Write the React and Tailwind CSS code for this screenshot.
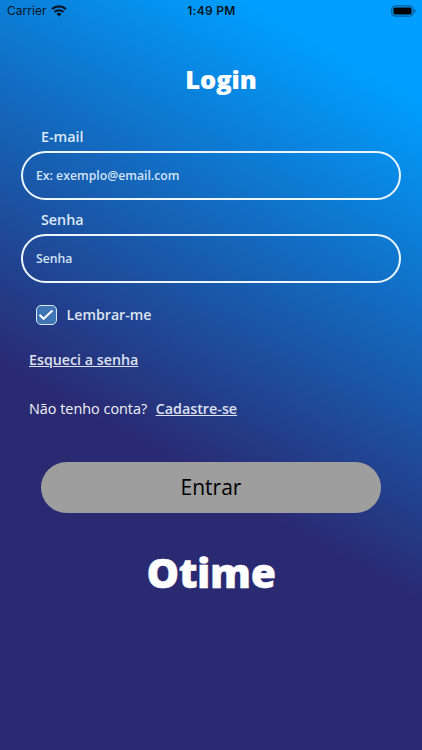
import React from "react";

function StatusBar() {
  return (
    <div className="grid h-[22px] grid-cols-3 items-center pl-[7px] pr-[6px] font-['Inter',sans-serif] text-[12px] leading-[22px] text-[#031522]">
      <div className="flex items-center gap-[4px]">
        <span className="tracking-[0.05px]">Carrier</span>
        <svg width="16" height="12" viewBox="0 0 16 12" fill="none" stroke="currentColor">
          <path d="M1.1 4.1a10 10 0 0 1 13.8 0" strokeWidth="2.4" />
          <path d="M3.5 7a6.5 6.5 0 0 1 9 0" strokeWidth="2.1" />
          <path d="M8 11.4 5.5 8.9a3.6 3.6 0 0 1 5 0Z" fill="currentColor" stroke="none" />
        </svg>
      </div>
      <span className="text-center font-semibold tracking-[0.3px]">1:49 PM</span>
      <svg className="justify-self-end" width="25" height="12" viewBox="0 0 25 12">
        <rect x="0.8" y="0.9" width="21.4" height="10.2" rx="3" fill="none" stroke="#04518a" strokeWidth="1" />
        <rect x="2.4" y="2.5" width="18.2" height="7" rx="1.4" fill="#000" />
        <path d="M23.3 4.3v3.4c.9-.3 1.3-1 1.3-1.7s-.4-1.4-1.3-1.7Z" fill="#04518a" />
      </svg>
    </div>
  );
}

function Field({ label, placeholder, type }) {
  return (
    <label className="flex flex-col">
      <span className="pl-5 text-[14.3px] leading-[20px] font-semibold text-[#dfe9f7]">{label}</span>
      <input
        type={type}
        placeholder={placeholder}
        className="mt-[4px] h-[49px] w-full rounded-[25px] border-2 border-[#eef6fd] bg-transparent px-[13px] text-[12.25px] font-semibold text-white outline-none placeholder:text-[#d3e3f5] placeholder:opacity-100"
      />
    </label>
  );
}

export default function App() {
  return (
    <main className="flex h-[750px] w-[422px] flex-col overflow-hidden bg-[linear-gradient(209.36deg,#009fff_10%,#2a2a72_61%)] font-['Open_Sans',sans-serif]">
      <StatusBar />
      <h1 className="mt-[40px] pl-[20px] text-center text-[25.3px] leading-[34px] font-extrabold text-white [-webkit-text-stroke:0.2px_white]">Login</h1>
      <form className="flex flex-col px-[21px] pt-[31px]">
        <div className="flex flex-col gap-[10px]">
          <Field label="E-mail" placeholder="Ex: exemplo@email.com" type="email" />
          <Field label="Senha" placeholder="Senha" type="password" />
        </div>
        <div className="mt-[21px] flex items-center gap-[10px] pl-[15px]">
          <span className="flex h-[20px] w-[20.5px] items-center justify-center rounded-[5px] border border-[#d9e8f7] bg-[#3f74b5]">
            <svg width="16" height="12" viewBox="0 0 16 12" fill="none" stroke="#fff" strokeWidth="2">
              <path d="m1.5 5.8 4.1 4 8.8-8.3" />
            </svg>
          </span>
          <span className="pt-px text-[14.2px] leading-[20px] font-semibold text-[#dde3f0]">Lembrar-me</span>
        </div>
        <a className="mt-[25px] self-start pl-[8px] text-[14.25px] leading-[20px] font-semibold text-[#dde0ee]">
          <span className="underline">Esqueci a senha</span>
        </a>
        <p className="mt-[29px] flex gap-[8.5px] pl-[8px] text-[14.4px] leading-[20px] text-[#f1f2f8]">
          <span>Não tenho conta?</span>
          <a className="text-[14.3px] font-semibold text-[#dde0ee] underline">Cadastre-se</a>
        </p>
        <button type="button" className="mx-[20px] mt-[43px] h-[51px] rounded-full bg-[#9e9e9e] pt-px text-[21px] font-medium text-black">
          Entrar
        </button>
      </form>
      <div className="mt-[30px] text-center text-[41px] leading-[58px] font-extrabold tracking-[-0.4px] text-white [-webkit-text-stroke:0.4px_white]">Otime</div>
    </main>
  );
}
